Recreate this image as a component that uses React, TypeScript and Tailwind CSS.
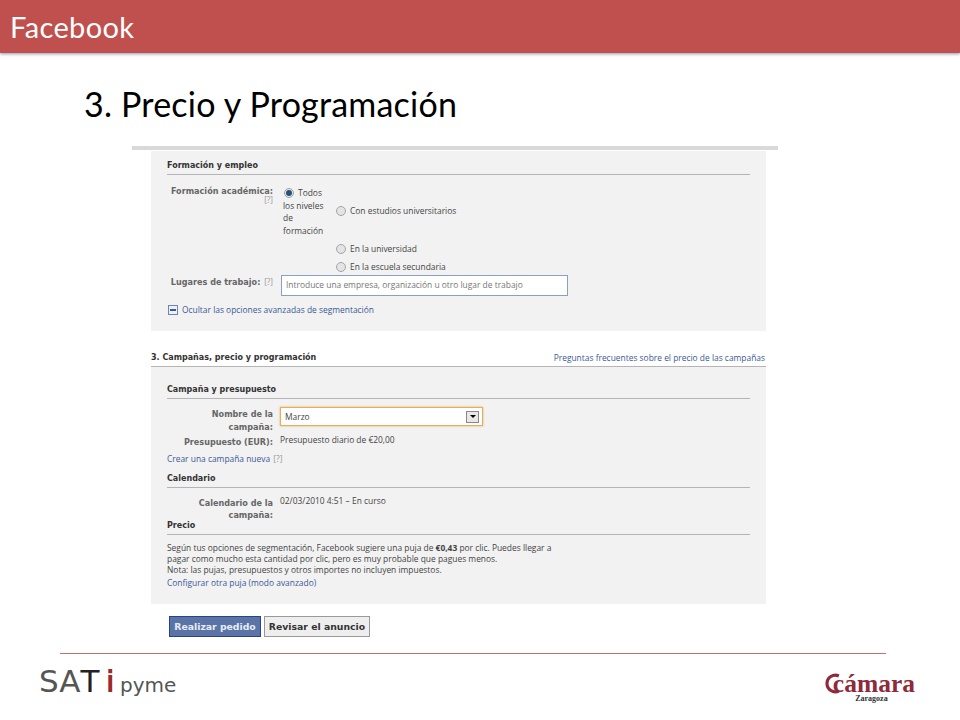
const tahoma = "font-['Open_Sans','Liberation_Sans',sans-serif]";
const verdana = "font-['DejaVu_Sans','Liberation_Sans',sans-serif]";

function Radio({ checked }: { checked?: boolean }) {
  return (
    <span className="flex h-[10px] w-[10px] shrink-0 items-center justify-center rounded-full border border-[#a5a5a5] bg-[#e4e4e4]">
      {checked && <span className="h-[6px] w-[6px] rounded-full bg-[#24527f]" />}
    </span>
  );
}

function RadioRow({ label }: { label: string }) {
  return (
    <div className="flex items-center gap-[4px]">
      <Radio />
      <span>{label}</span>
    </div>
  );
}

function Label({ children }: { children: React.ReactNode }) {
  return (
    <div className={`${verdana} w-[106px] shrink-0 text-right text-[8.1px] leading-[12.5px] font-bold text-[#666]`}>
      {children}
    </div>
  );
}

function SectionTitle({ children }: { children: React.ReactNode }) {
  return (
    <div className={`${verdana} border-b border-[#b5b5b5] pt-px pb-[2px] text-[8px] leading-[12px] font-bold text-[#333]`}>
      {children}
    </div>
  );
}

function SatiLogo() {
  return (
    <div className="flex items-baseline font-['DejaVu_Sans',sans-serif] leading-none">
      <span className="text-[31px] text-[#555]">SA</span>
      <span className="text-[31px] text-[#222]">T</span>
      <span className="ml-[6px] text-[31px] font-bold text-[#9b2a2d] scale-x-[0.7]">i</span>
      <span className="ml-[4px] text-[20px] text-[#555]">pyme</span>
    </div>
  );
}

function CamaraLogo() {
  return (
    <div className="flex flex-col items-center pt-[6px] font-['Liberation_Serif',serif] leading-none">
      <div className="flex h-[23px] items-center text-[#8f2a3c]">
        <svg viewBox="0 0 24 26" className="mr-[-9px] h-[25px] w-[19px]" aria-hidden="true">
          <path d="M20 3.5A10.5 10.5 0 1 0 20 22.5" fill="none" stroke="currentColor" strokeWidth="4" />
        </svg>
        <span className="text-[25.5px] font-bold">cámara</span>
      </div>
      <span className="ml-[5px] text-[8px] font-bold text-[#333]">Zaragoza</span>
    </div>
  );
}

export default function App() {
  return (
    <div className="flex h-[720px] w-[960px] flex-col overflow-hidden bg-white">
      {/* Slide header */}
      <header className="flex h-[53px] shrink-0 items-center bg-[#c0504d] pb-px pl-[10px] shadow-[0_1px_3px_rgba(70,80,110,0.6)]">
        <h1 className="font-['Lato',sans-serif] text-[29px] leading-none tracking-[0.35px] text-white">Facebook</h1>
      </header>

      <h2 className="mt-[30px] ml-[84px] font-['Lato',sans-serif] text-[34px] leading-[41px] tracking-[0.2px] text-black">
        3. Precio y Programación
      </h2>

      {/* Screenshot inside the slide */}
      <main className={`${tahoma} mt-[22px] ml-[132px] w-[646px] border-t-4 border-[#d9d9d9] text-[8.42px] leading-[12px] text-[#444]`}>
        <section className="mt-px ml-[19px] h-[180px] w-[615px] bg-[#f2f2f2] px-[16px] pt-[8px]">
          <SectionTitle>Formación y empleo</SectionTitle>
          <div className="mt-[9px] flex">
            <div className="pt-px">
              <Label>
                Formación académica:
                <div className={`${tahoma} -mt-[4px] font-normal text-[#999]`}>[?]</div>
              </Label>
            </div>
            <div className="ml-[10px]">
              <div className="flex items-center">
                <div className="w-[53px] leading-[12.5px]">
                  <div className="flex items-center gap-[4px] pt-[3px] pl-[1px]">
                    <Radio checked />
                    <span>Todos</span>
                  </div>
                  los niveles
                  <br />
                  de
                  <br />
                  formación
                </div>
                <RadioRow label="Con estudios universitarios" />
              </div>
              <div className="mt-[6px] ml-[53px] flex flex-col gap-[6px]">
                <RadioRow label="En la universidad" />
                <RadioRow label="En la escuela secundaria" />
              </div>
            </div>
          </div>
          <div className="mt-[1.5px] flex">
            <div className={`${verdana} w-[106px] shrink-0 pt-[1.5px] text-right text-[8.1px] leading-[12px] font-bold whitespace-nowrap text-[#666]`}>
              Lugares de trabajo: <span className={`${tahoma} ml-px font-normal text-[#999]`}>[?]</span>
            </div>
            <div className="ml-[8px] flex h-[21px] w-[287px] items-center border border-[#8aa0bf] bg-white pl-[4px] text-[#777]">
              Introduce una empresa, organización u otro lugar de trabajo
            </div>
          </div>
          <div className="mt-[8px] ml-px flex items-center gap-[4px] text-[#3b5998]">
            <span className="flex h-[10px] w-[10px] items-center justify-center border border-[#6d84b4] bg-[#eef1f7]">
              <span className="h-[2px] w-[6px] bg-[#3b5998]" />
            </span>
            Ocultar las opciones avanzadas de segmentación
          </div>
        </section>

        <section className="mt-[20px] ml-[19px] w-[615px]">
          <div className="flex items-center justify-between border-b border-[#b5b5b5] pt-px pr-px pb-[2px]">
            <span className={`${verdana} text-[8px] leading-[12px] font-bold text-[#333]`}>
              3. Campañas, precio y programación
            </span>
            <span className="text-[#3b5998]">Preguntas frecuentes sobre el precio de las campañas</span>
          </div>
          <div className="h-[237px] bg-[#f2f2f2] px-[16px] pt-[16px]">
            <SectionTitle>Campaña y presupuesto</SectionTitle>
            <div className="mt-[9px] flex">
              <Label>
                Nombre de la
                <br />
                campaña:
              </Label>
              <div className="-mt-px ml-[7px] flex h-[19px] w-[203px] items-center justify-between border border-[#e8ad5c] bg-white pr-[3px] pl-[4px] shadow-[0_0_2px_#e8ad5c]">
                Marzo
                <span className="flex h-[12px] w-[13px] items-center justify-center border border-[#888] bg-[#e8e8e8]">
                  <span className="border-x-[3px] border-t-[3px] border-x-transparent border-t-black" />
                </span>
              </div>
            </div>
            <div className="mt-[3px] flex">
              <Label>Presupuesto (EUR):</Label>
              <span className="-mt-[2px] ml-[7px]">Presupuesto diario de €20,00</span>
            </div>
            <div className="mt-[4px] text-[#3b5998]">
              Crear una campaña nueva <span className="ml-[1px] text-[#999]">[?]</span>
            </div>
            <div className="mt-[7px]">
              <SectionTitle>Calendario</SectionTitle>
            </div>
            <div className="mt-[9px] flex">
              <Label>
                Calendario de la
                <br />
                campaña:
              </Label>
              <span className="-mt-[2px] ml-[7px]">02/03/2010 4:51 – En curso</span>
            </div>
            <div className="-mt-[3px]">
              <SectionTitle>Precio</SectionTitle>
            </div>
            <p className="mt-[7px] w-[400px] leading-[11px]">
              Según tus opciones de segmentación, Facebook sugiere una puja de <b>€0,43</b> por clic. Puedes llegar a
              pagar como mucho esta cantidad por clic, pero es muy probable que pagues menos.
              <br />
              Nota: las pujas, presupuestos y otros importes no incluyen impuestos.
            </p>
            <div className="mt-[2px] text-[#3b5998]">Configurar otra puja (modo avanzado)</div>
          </div>
        </section>

        <div className={`${verdana} mt-[12px] ml-[37px] flex gap-[3px] text-[9.3px] font-bold`}>
          <span className="flex h-[21px] w-[92px] items-center justify-center border border-[#29447e] bg-[#5b74a8] text-[#e8edf5]">
            Realizar pedido
          </span>
          <span className="flex h-[21px] w-[106px] items-center justify-center border border-[#999] bg-[#eeeeee] text-[#333]">
            Revisar el anuncio
          </span>
        </div>
      </main>

      {/* Footer */}
      <footer className="mt-[16px] ml-[60px] w-[826px] border-t border-[#c0706d]" />
      <div className="mt-[12px] flex items-start justify-between pr-[45px] pl-[39px]">
        <SatiLogo />
        <CamaraLogo />
      </div>
    </div>
  );
}
